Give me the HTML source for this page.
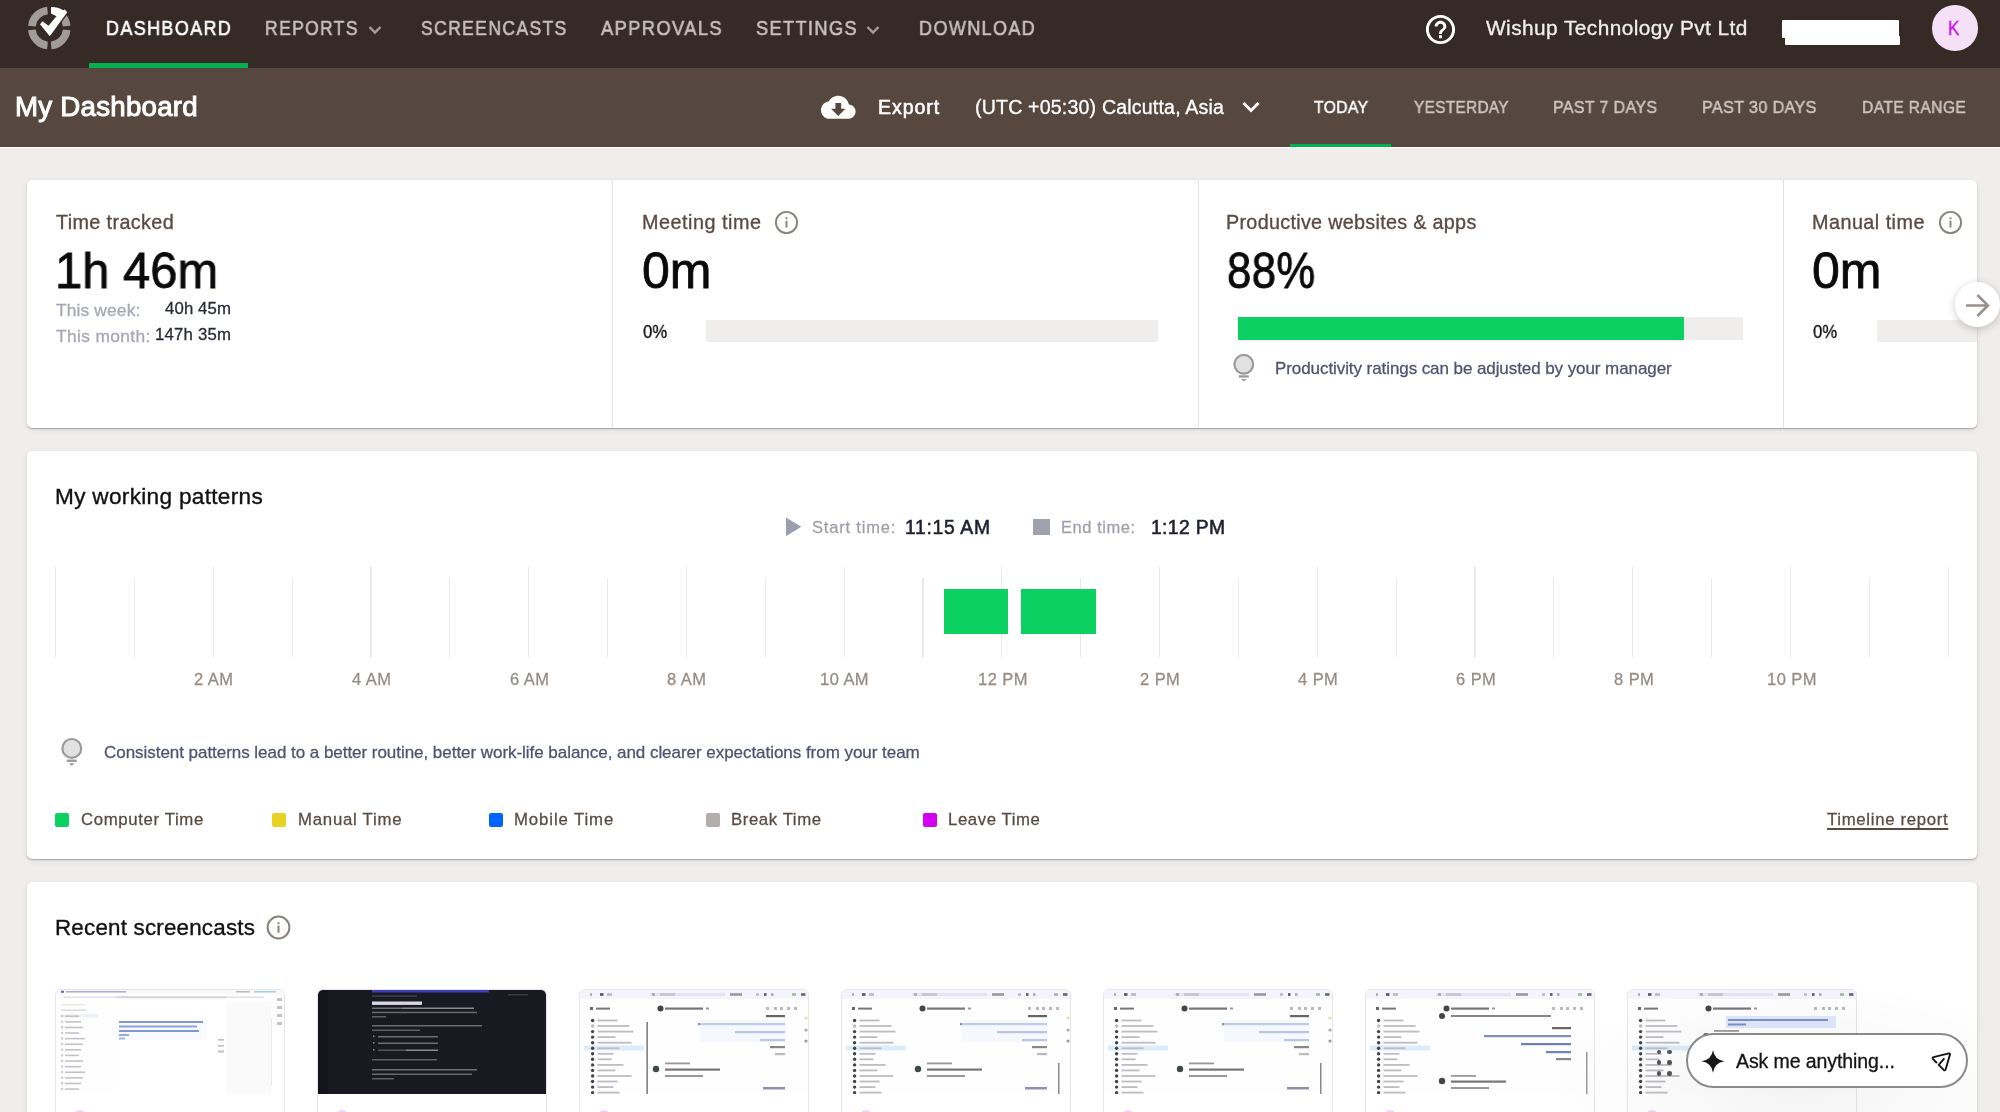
<!DOCTYPE html>
<html><head><meta charset="utf-8">
<style>
*{margin:0;padding:0;box-sizing:border-box;}
html,body{width:2000px;height:1112px;overflow:hidden;background:#efeeec;font-family:"Liberation Sans",sans-serif;}
.a{position:absolute;}
.t{position:absolute;white-space:nowrap;line-height:1;z-index:3;will-change:transform;}
#hdr{left:0;top:0;width:2000px;height:67.5px;background:#352a26;}
#sub{left:0;top:67.5px;width:2000px;height:79px;background:#56473f;}
.card{position:absolute;background:#fff;border-radius:5px;box-shadow:0 1px 1.5px rgba(0,0,0,0.28),0 2px 6px rgba(0,0,0,0.07);}
.vdiv{position:absolute;width:1px;background:#e7e4e2;}
.bar{position:absolute;background:#efeeec;}
.grid{position:absolute;width:1.2px;background:#ebe8e6;}
.sq{position:absolute;width:14px;height:14px;border-radius:2px;}
.thumb{position:absolute;top:988.5px;width:230px;height:130px;border:1px solid #e6e6e6;border-radius:6px;background:#fff;overflow:hidden;}
</style></head><body>
<div id="hdr" class="a"></div>
<div id="sub" class="a"></div>
<div class="a" style="left:0;top:146.5px;width:2000px;height:1.2px;background:#fff;"></div>
<!-- green underline nav -->
<div class="a" style="left:89px;top:63px;width:159px;height:4.8px;background:#03b04f;"></div>
<div class="a" style="left:1290px;top:143.5px;width:100.5px;height:3px;background:#03b04f;"></div>

<!-- logo -->
<svg class="a" style="left:0;top:0" width="80" height="60" viewBox="0 0 80 60">
  <g fill="none" stroke="#a29c99" stroke-width="7.6">
    <path d="M 47.5 10.5 A 17.4 17.4 0 0 0 31.9 26.2"/>
    <path d="M 31.9 29.9 A 17.4 17.4 0 0 0 47.5 45.5"/>
    <path d="M 51.1 45.5 A 17.4 17.4 0 0 0 66.7 29.9"/>
    <path d="M 66.7 26.2 A 17.4 17.4 0 0 0 51.1 10.5"/>
  </g>
  <path d="M 40 24.2 L 42.5 21.2 L 48.5 25.7 L 56.5 16.3 L 51 13.5 L 51 6.9 A 21.2 21.2 0 0 1 63.1 10.2 L 64.8 9.6 L 67.2 12.3 L 49.8 36.3 Z" fill="#fff" stroke="#352a26" stroke-width="2.6" stroke-linejoin="miter"/>
  <path d="M 40 24.2 L 42.5 21.2 L 48.5 25.7 L 56.5 16.3 L 51 13.5 L 51 6.9 A 21.2 21.2 0 0 1 63.1 10.2 L 64.8 9.6 L 67.2 12.3 L 49.8 36.3 Z" fill="#fff"/>
</svg>

<!-- nav chevrons -->
<svg class="a" style="left:368px;top:25px" width="14" height="10" viewBox="0 0 14 10"><path d="M1.5 2 L7 7.5 L12.5 2" fill="none" stroke="#a89f9a" stroke-width="2.4"/></svg>
<svg class="a" style="left:866px;top:25px" width="14" height="10" viewBox="0 0 14 10"><path d="M1.5 2 L7 7.5 L12.5 2" fill="none" stroke="#a89f9a" stroke-width="2.4"/></svg>

<!-- help icon -->
<svg class="a" style="left:1423px;top:12px" width="35" height="35" viewBox="0 0 24 24"><path fill="#fff" d="M11 18h2v-2h-2v2zm1-16C6.48 2 2 6.48 2 12s4.48 10 10 10 10-4.48 10-10S17.52 2 12 2zm0 18c-4.41 0-8-3.59-8-8s3.59-8 8-8 8 3.59 8 8-3.59 8-8 8zm0-14c-2.21 0-4 1.79-4 4h2c0-1.1.9-2 2-2s2 .9 2 2c0 2-3 1.75-3 5h2c0-2.25 3-2.5 3-5 0-2.21-1.79-4-4-4z"/></svg>
<!-- redaction -->
<div class="a" style="left:1782px;top:20px;width:117px;height:18px;background:#fff;border-radius:1px;"></div>
<div class="a" style="left:1785px;top:36px;width:115px;height:8.5px;background:#fff;border-radius:1px;"></div>
<!-- avatar -->
<div class="a" style="left:1932.2px;top:5.2px;width:45.7px;height:45.7px;border-radius:50%;background:#f6e0f8;"></div>

<!-- cloud download icon -->
<svg class="a" style="left:821.4px;top:90.4px" width="34.6" height="34.6" viewBox="0 0 24 24"><path fill="#fff" d="M19.35 10.04C18.67 6.59 15.64 4 12 4 9.11 4 6.6 5.64 5.35 8.04 2.34 8.36 0 10.91 0 14c0 3.31 2.69 6 6 6h13c2.76 0 5-2.24 5-5 0-2.64-2.05-4.78-4.65-4.96zM17 13l-5 5-5-5h3V9h4v4h3z"/></svg>
<!-- tz chevron -->
<svg class="a" style="left:1241px;top:99px" width="20" height="16" viewBox="0 0 20 16"><path d="M2.5 4 L10 11.5 L17.5 4" fill="none" stroke="#fff" stroke-width="3"/></svg>

<!-- CARD 1 -->
<div class="card" style="left:26.8px;top:180.4px;width:1950.5px;height:248px;"></div>
<div class="vdiv" style="left:612px;top:180.4px;height:248px;"></div>
<div class="vdiv" style="left:1197.6px;top:180.4px;height:248px;"></div>
<div class="vdiv" style="left:1782.5px;top:180.4px;height:248px;"></div>
<div class="bar" style="left:706px;top:320px;width:452px;height:22px;"></div>
<div class="bar" style="left:1238px;top:317px;width:504.7px;height:22.7px;"></div>
<div class="a" style="left:1238px;top:317px;width:446.2px;height:22.7px;background:#0ad162;"></div>
<div class="bar" style="left:1876.8px;top:320.3px;width:100.5px;height:21.7px;"></div>
<!-- info icons -->
<svg class="a" style="left:774px;top:210px" width="25" height="25" viewBox="0 0 25 25"><circle cx="12.5" cy="12.5" r="10.6" fill="none" stroke="#8c827c" stroke-width="1.9"/><rect x="11.55" y="10.6" width="1.9" height="7" fill="#8c827c"/><rect x="11.55" y="7.3" width="1.9" height="1.9" fill="#8c827c"/></svg>
<svg class="a" style="left:1937.8px;top:210px" width="25" height="25" viewBox="0 0 25 25"><circle cx="12.5" cy="12.5" r="10.6" fill="none" stroke="#8c827c" stroke-width="1.9"/><rect x="11.55" y="10.6" width="1.9" height="7" fill="#8c827c"/><rect x="11.55" y="7.3" width="1.9" height="1.9" fill="#8c827c"/></svg>
<!-- bulb card1 -->
<svg class="a" style="left:1231px;top:352px" width="26" height="32" viewBox="0 0 26 32"><circle cx="12.8" cy="12.3" r="9.4" fill="#e2e2e2" stroke="#9a9a9a" stroke-width="2.2"/><rect x="7.8" y="23.3" width="10" height="2.3" fill="#9a9a9a"/><path d="M10 27 L15.6 27 L12.8 29.6 Z" fill="#9a9a9a"/></svg>
<!-- arrow button -->
<div class="a" style="left:1955px;top:282px;width:44.6px;height:44.6px;border-radius:50%;background:#fff;box-shadow:0 2px 8px rgba(0,0,0,0.2);"></div>
<svg class="a" style="left:1964px;top:292px" width="28" height="28" viewBox="0 0 28 28"><path d="M2 13.5 H23.5 M13.4 3 L24 13.5 L13.4 24" fill="none" stroke="#998f8a" stroke-width="2.5"/></svg>

<!-- CARD 2 -->
<div class="card" style="left:26.8px;top:451px;width:1950.5px;height:408px;"></div>
<svg class="a" style="left:785px;top:517px" width="17" height="20" viewBox="0 0 17 20"><path d="M1 0.6 L16.3 9.7 L1 19.3 Z" fill="#9c9fac"/></svg>
<div class="a" style="left:1033px;top:518.8px;width:17px;height:16.5px;background:#9fa1ad;"></div>
<div class="grid" style="left:54.95px;top:566.7px;height:89.9px;"></div>
<div class="grid" style="left:133.81px;top:577.8px;height:78.8px;"></div>
<div class="grid" style="left:212.67px;top:566.7px;height:89.9px;"></div>
<div class="grid" style="left:291.53px;top:577.8px;height:78.8px;"></div>
<div class="grid" style="left:370.39px;top:566.7px;height:89.9px;"></div>
<div class="grid" style="left:449.25px;top:577.8px;height:78.8px;"></div>
<div class="grid" style="left:528.11px;top:566.7px;height:89.9px;"></div>
<div class="grid" style="left:606.97px;top:577.8px;height:78.8px;"></div>
<div class="grid" style="left:685.83px;top:566.7px;height:89.9px;"></div>
<div class="grid" style="left:764.69px;top:577.8px;height:78.8px;"></div>
<div class="grid" style="left:843.55px;top:566.7px;height:89.9px;"></div>
<div class="grid" style="left:922.41px;top:577.8px;height:78.8px;"></div>
<div class="grid" style="left:1001.27px;top:566.7px;height:89.9px;"></div>
<div class="grid" style="left:1080.13px;top:577.8px;height:78.8px;"></div>
<div class="grid" style="left:1158.99px;top:566.7px;height:89.9px;"></div>
<div class="grid" style="left:1237.85px;top:577.8px;height:78.8px;"></div>
<div class="grid" style="left:1316.71px;top:566.7px;height:89.9px;"></div>
<div class="grid" style="left:1395.57px;top:577.8px;height:78.8px;"></div>
<div class="grid" style="left:1474.43px;top:566.7px;height:89.9px;"></div>
<div class="grid" style="left:1553.29px;top:577.8px;height:78.8px;"></div>
<div class="grid" style="left:1632.15px;top:566.7px;height:89.9px;"></div>
<div class="grid" style="left:1711.01px;top:577.8px;height:78.8px;"></div>
<div class="grid" style="left:1789.87px;top:566.7px;height:89.9px;"></div>
<div class="grid" style="left:1868.73px;top:577.8px;height:78.8px;"></div>
<div class="grid" style="left:1947.59px;top:566.7px;height:89.9px;"></div>
<div class="a" style="left:943.7px;top:589px;width:64.6px;height:45px;background:#0ad162;"></div>
<div class="a" style="left:1021.1px;top:589px;width:75.4px;height:45px;background:#0ad162;"></div>
<svg class="a" style="left:59px;top:736px" width="26" height="32" viewBox="0 0 26 32"><circle cx="12.8" cy="12.4" r="9.4" fill="#e2e2e2" stroke="#9a9a9a" stroke-width="2.2"/><rect x="7.8" y="23.6" width="10" height="2.3" fill="#9a9a9a"/><path d="M10 27.3 L15.6 27.3 L12.8 29.9 Z" fill="#9a9a9a"/></svg>
<div class="sq" style="left:55.2px;top:813.2px;background:#0ad162;"></div>
<div class="sq" style="left:272.2px;top:813.2px;background:#e8d322;"></div>
<div class="sq" style="left:489.2px;top:813.2px;background:#0064fe;"></div>
<div class="sq" style="left:706px;top:813.2px;background:#b3aeab;"></div>
<div class="sq" style="left:923.4px;top:813.2px;background:#d300f2;"></div>

<!-- CARD 3 -->
<div class="card" style="left:26.8px;top:882px;width:1950.5px;height:260px;"></div>
<svg class="a" style="left:265.8px;top:914.5px" width="25" height="25" viewBox="0 0 25 25"><circle cx="12.5" cy="12.5" r="10.9" fill="none" stroke="#8c827c" stroke-width="2"/><rect x="11.5" y="10.6" width="2" height="7.2" fill="#8c827c"/><rect x="11.5" y="7.2" width="2" height="2" fill="#8c827c"/></svg>
<div class="thumb" style="left:54.5px;"><svg width="228" height="104.5" viewBox="0 0 228 104.5" style="position:absolute;left:0;top:0;filter:blur(0.45px)"><rect width="228" height="104.5" fill="#fff"/><rect x="0" y="0" width="228" height="3.5" fill="#f8f8fc"/><rect x="5" y="0.8" width="3" height="2" fill="#6a5acd"/><rect x="10" y="1" width="60" height="1.5" fill="#a9acd6"/><rect x="180" y="1" width="14" height="1.5" fill="#bbb"/><rect x="198" y="1" width="22" height="1.5" fill="#9fd0e8"/><rect x="8" y="6.5" width="200" height="1.6" fill="#e2e2e6"/><rect x="60" y="6.2" width="110" height="2" fill="#d6d6dc"/><rect x="5" y="14" width="25" height="1.2" fill="#ddd"/><rect x="5" y="19.5" width="25" height="1.3" fill="#c8c8cc"/><rect x="4" y="24" width="38" height="3.5" fill="#e8ecfa"/><rect x="9" y="25.5" width="14" height="1.5" fill="#a6a6ae"/><rect x="5" y="25.0" width="2.2" height="2.2" fill="#b8b8c0"/><rect x="9" y="31.1" width="16" height="1.5" fill="#a6a6ae"/><rect x="5" y="30.6" width="2.2" height="2.2" fill="#b8b8c0"/><rect x="9" y="36.7" width="18" height="1.5" fill="#a6a6ae"/><rect x="5" y="36.2" width="2.2" height="2.2" fill="#b8b8c0"/><rect x="9" y="42.3" width="14" height="1.5" fill="#a6a6ae"/><rect x="5" y="41.8" width="2.2" height="2.2" fill="#b8b8c0"/><rect x="9" y="47.9" width="20" height="1.5" fill="#a6a6ae"/><rect x="5" y="47.4" width="2.2" height="2.2" fill="#b8b8c0"/><rect x="9" y="53.5" width="18" height="1.5" fill="#a6a6ae"/><rect x="5" y="53.0" width="2.2" height="2.2" fill="#b8b8c0"/><rect x="9" y="59.1" width="16" height="1.5" fill="#a6a6ae"/><rect x="5" y="58.6" width="2.2" height="2.2" fill="#b8b8c0"/><rect x="9" y="64.7" width="14" height="1.5" fill="#a6a6ae"/><rect x="5" y="64.2" width="2.2" height="2.2" fill="#b8b8c0"/><rect x="9" y="70.3" width="18" height="1.5" fill="#a6a6ae"/><rect x="5" y="69.8" width="2.2" height="2.2" fill="#b8b8c0"/><rect x="9" y="75.9" width="16" height="1.5" fill="#a6a6ae"/><rect x="5" y="75.4" width="2.2" height="2.2" fill="#b8b8c0"/><rect x="9" y="81.5" width="20" height="1.5" fill="#a6a6ae"/><rect x="5" y="81.0" width="2.2" height="2.2" fill="#b8b8c0"/><rect x="9" y="87.1" width="18" height="1.5" fill="#a6a6ae"/><rect x="5" y="86.6" width="2.2" height="2.2" fill="#b8b8c0"/><rect x="9" y="92.7" width="16" height="1.5" fill="#a6a6ae"/><rect x="5" y="92.2" width="2.2" height="2.2" fill="#b8b8c0"/><rect x="9" y="98.3" width="14" height="1.5" fill="#a6a6ae"/><rect x="5" y="97.8" width="2.2" height="2.2" fill="#b8b8c0"/><rect x="63" y="31" width="84" height="2" fill="#4766c0"/><rect x="63" y="35.5" width="78" height="2" fill="#5b78c8"/><rect x="63" y="40" width="80" height="2" fill="#4766c0"/><rect x="63" y="44" width="10" height="2" fill="#6a85cc"/><rect x="63" y="47.5" width="6" height="2" fill="#7d93d0"/><rect x="60" y="30" width="90" height="20" fill="#eef2fc" opacity="0.35"/><rect x="162" y="49" width="6" height="1.6" fill="#c0c0c6"/><rect x="162" y="55" width="6" height="1.6" fill="#c0c0c6"/><rect x="162" y="60" width="6" height="3" fill="#d0d0d6"/><rect x="221" y="8" width="5" height="3" fill="#c4c4ca"/><rect x="221" y="16" width="5" height="3" fill="#c4c4ca"/><rect x="221" y="24" width="5" height="3" fill="#c4c4ca"/><rect x="221" y="32" width="5" height="3" fill="#c4c4ca"/><rect x="215" y="28" width="1" height="68" fill="#ececf0"/><rect x="170" y="12" width="45" height="92" fill="#fafafb"/><rect x="0" y="14" width="58" height="90.5" fill="#fbfbfd" opacity="0.3"/></svg></div>
<div class="thumb" style="left:316.5px;"><svg width="228" height="104.5" viewBox="0 0 228 104.5" style="position:absolute;left:0;top:0;filter:blur(0.45px)"><rect width="228" height="104.5" fill="#191922"/><rect x="54" y="0" width="117" height="2.5" fill="#3d3fb5"/><rect x="54" y="5.5" width="45" height="1.2" fill="#4a4a55"/><rect x="54" y="11.5" width="50" height="3.4" fill="#d8d8de"/><rect x="54" y="17.5" width="30" height="1.5" fill="#6e6e7a"/><rect x="84" y="17.5" width="72" height="1.5" fill="#8a8a95"/><rect x="54" y="21.7" width="105" height="1.5" fill="#6a6a76"/><rect x="54" y="26" width="14" height="1.5" fill="#5e5e6a"/><rect x="54" y="35" width="110" height="1.5" fill="#6a6a76"/><rect x="54" y="39.5" width="48" height="1.5" fill="#5e5e6a"/><rect x="60" y="46" width="60" height="1.5" fill="#6e6e7a"/><rect x="60" y="52.5" width="60" height="1.5" fill="#6e6e7a"/><rect x="60" y="59.5" width="28" height="1.5" fill="#55555f"/><rect x="88" y="59.5" width="32" height="1.5" fill="#8a8a95"/><rect x="54" y="69" width="65" height="1.5" fill="#5e5e6a"/><rect x="54" y="79" width="105" height="1.5" fill="#6e6e7a"/><rect x="54" y="83.5" width="100" height="1.5" fill="#6a6a76"/><rect x="54" y="88" width="22" height="1.5" fill="#5e5e6a"/><rect x="55" y="45.5" width="1.5" height="1.5" fill="#888"/><rect x="55" y="52" width="1.5" height="1.5" fill="#888"/><rect x="55" y="59" width="1.5" height="1.5" fill="#888"/><rect x="0" y="0" width="10" height="104.5" fill="#14141c"/><rect x="190" y="4" width="20" height="1.5" fill="#3a3a44"/></svg></div>
<div class="thumb" style="left:578.5px;"><svg width="228" height="104.5" viewBox="0 0 228 104.5" style="position:absolute;left:0;top:0;filter:blur(0.45px)"><rect width="228" height="104.5" fill="#fefeff"/><rect x="0" y="0" width="228" height="9" fill="#f5f3fb"/><rect x="70" y="3" width="75" height="3" fill="#e6e4f3"/><rect x="10" y="3.2" width="2" height="2.6" fill="#aaa"/><rect x="20" y="3.2" width="3.5" height="2.6" fill="#555"/><rect x="27" y="3.2" width="5" height="2.6" fill="#bbb"/><rect x="72" y="3.2" width="3" height="2.6" fill="#aaa"/><rect x="80" y="3.2" width="15" height="2.6" fill="#c4c4cc"/><rect x="150" y="3.2" width="12" height="2.6" fill="#999"/><rect x="176" y="3.2" width="3" height="2.6" fill="#bbb"/><rect x="184" y="3.2" width="2.5" height="2.6" fill="#555"/><rect x="191" y="3.2" width="2.5" height="2.6" fill="#aaa"/><rect x="212" y="3.2" width="4" height="2.6" fill="#9b9"/><rect x="221" y="3.2" width="4.5" height="2.6" fill="#666"/><rect x="10" y="17" width="3" height="3" fill="#666"/><rect x="16" y="17.6" width="14" height="2" fill="#777"/><rect x="4" y="55.5" width="60" height="5" fill="#dcecfa"/><circle cx="12.6" cy="30.5" r="1.7" fill="#444"/><rect x="17.5" y="29.6" width="20" height="1.8" fill="#bdbdc2"/><circle cx="12.6" cy="36.0" r="1.7" fill="#bbb"/><rect x="17.5" y="35.1" width="32" height="1.8" fill="#bdbdc2"/><circle cx="12.6" cy="41.6" r="1.7" fill="#444"/><rect x="17.5" y="40.7" width="36" height="1.8" fill="#bdbdc2"/><circle cx="12.6" cy="47.1" r="1.7" fill="#444"/><rect x="17.5" y="46.2" width="18" height="1.8" fill="#bdbdc2"/><circle cx="12.6" cy="52.7" r="1.7" fill="#444"/><rect x="17.5" y="51.8" width="34" height="1.8" fill="#bdbdc2"/><circle cx="12.6" cy="58.2" r="1.7" fill="#444"/><rect x="17.5" y="57.4" width="22" height="1.8" fill="#bdbdc2"/><circle cx="12.6" cy="63.8" r="1.7" fill="#444"/><rect x="17.5" y="62.9" width="16" height="1.8" fill="#bdbdc2"/><circle cx="12.6" cy="69.3" r="1.7" fill="#444"/><rect x="17.5" y="68.4" width="14" height="1.8" fill="#bdbdc2"/><circle cx="12.6" cy="74.9" r="1.7" fill="#444"/><rect x="17.5" y="74.0" width="26" height="1.8" fill="#bdbdc2"/><circle cx="12.6" cy="80.4" r="1.7" fill="#444"/><rect x="17.5" y="79.5" width="18" height="1.8" fill="#bdbdc2"/><circle cx="12.6" cy="86.0" r="1.7" fill="#444"/><rect x="17.5" y="85.1" width="34" height="1.8" fill="#bdbdc2"/><circle cx="12.6" cy="91.5" r="1.7" fill="#444"/><rect x="17.5" y="90.6" width="20" height="1.8" fill="#bdbdc2"/><circle cx="12.6" cy="97.1" r="1.7" fill="#444"/><rect x="17.5" y="96.2" width="16" height="1.8" fill="#bdbdc2"/><circle cx="12.6" cy="102.6" r="1.7" fill="#444"/><rect x="17.5" y="101.7" width="22" height="1.8" fill="#bdbdc2"/><circle cx="80.5" cy="18.5" r="3" fill="#444"/><rect x="85" y="17.5" width="38" height="2.2" fill="#777"/><rect x="126" y="17.5" width="3" height="2" fill="#999"/><rect x="186" y="17" width="3" height="3" fill="#bbb"/><rect x="194" y="17" width="3" height="3" fill="#bbb"/><rect x="200" y="17" width="3" height="3" fill="#bbb"/><rect x="207" y="17" width="3" height="3" fill="#bbb"/><rect x="214" y="17" width="3" height="3" fill="#bbb"/><rect x="0" y="0" width="0" height="0"/><rect x="186" y="25" width="19" height="2.2" fill="#666"/><rect x="118" y="33" width="87" height="2.2" fill="#7d8fc0"/><rect x="155" y="41" width="50" height="2.2" fill="#6f7fb8"/><rect x="180" y="49" width="25" height="2.2" fill="#7283b8"/><rect x="190" y="56" width="15" height="2.2" fill="#888"/><rect x="195" y="63" width="10" height="2.2" fill="#bbb"/><rect x="120" y="30" width="86" height="22" fill="#eef3fd" opacity="0.6"/><circle cx="76" cy="79" r="3.2" fill="#3d4a42"/><rect x="85" y="72.5" width="25" height="1.8" fill="#999"/><rect x="85" y="78.5" width="55" height="2.2" fill="#777"/><rect x="85" y="85" width="38" height="2" fill="#999"/><rect x="183" y="97" width="22" height="2.5" fill="#8d8fb3"/><circle cx="226" cy="28" r="1.6" fill="#cfe6a0"/><circle cx="226" cy="40" r="1.6" fill="#aab"/><circle cx="226" cy="51" r="1.6" fill="#99a"/><rect x="66.5" y="32" width="1.2" height="73" fill="#555"/></svg></div>
<div class="thumb" style="left:840.5px;"><svg width="228" height="104.5" viewBox="0 0 228 104.5" style="position:absolute;left:0;top:0;filter:blur(0.45px)"><rect width="228" height="104.5" fill="#fefeff"/><rect x="0" y="0" width="228" height="9" fill="#f5f3fb"/><rect x="70" y="3" width="75" height="3" fill="#e6e4f3"/><rect x="10" y="3.2" width="2" height="2.6" fill="#aaa"/><rect x="20" y="3.2" width="3.5" height="2.6" fill="#555"/><rect x="27" y="3.2" width="5" height="2.6" fill="#bbb"/><rect x="72" y="3.2" width="3" height="2.6" fill="#aaa"/><rect x="80" y="3.2" width="15" height="2.6" fill="#c4c4cc"/><rect x="150" y="3.2" width="12" height="2.6" fill="#999"/><rect x="176" y="3.2" width="3" height="2.6" fill="#bbb"/><rect x="184" y="3.2" width="2.5" height="2.6" fill="#555"/><rect x="191" y="3.2" width="2.5" height="2.6" fill="#aaa"/><rect x="212" y="3.2" width="4" height="2.6" fill="#9b9"/><rect x="221" y="3.2" width="4.5" height="2.6" fill="#666"/><rect x="10" y="17" width="3" height="3" fill="#666"/><rect x="16" y="17.6" width="14" height="2" fill="#777"/><rect x="4" y="55.5" width="60" height="5" fill="#dcecfa"/><circle cx="12.6" cy="30.5" r="1.7" fill="#444"/><rect x="17.5" y="29.6" width="20" height="1.8" fill="#bdbdc2"/><circle cx="12.6" cy="36.0" r="1.7" fill="#bbb"/><rect x="17.5" y="35.1" width="32" height="1.8" fill="#bdbdc2"/><circle cx="12.6" cy="41.6" r="1.7" fill="#444"/><rect x="17.5" y="40.7" width="36" height="1.8" fill="#bdbdc2"/><circle cx="12.6" cy="47.1" r="1.7" fill="#444"/><rect x="17.5" y="46.2" width="18" height="1.8" fill="#bdbdc2"/><circle cx="12.6" cy="52.7" r="1.7" fill="#444"/><rect x="17.5" y="51.8" width="34" height="1.8" fill="#bdbdc2"/><circle cx="12.6" cy="58.2" r="1.7" fill="#444"/><rect x="17.5" y="57.4" width="22" height="1.8" fill="#bdbdc2"/><circle cx="12.6" cy="63.8" r="1.7" fill="#444"/><rect x="17.5" y="62.9" width="16" height="1.8" fill="#bdbdc2"/><circle cx="12.6" cy="69.3" r="1.7" fill="#444"/><rect x="17.5" y="68.4" width="14" height="1.8" fill="#bdbdc2"/><circle cx="12.6" cy="74.9" r="1.7" fill="#444"/><rect x="17.5" y="74.0" width="26" height="1.8" fill="#bdbdc2"/><circle cx="12.6" cy="80.4" r="1.7" fill="#444"/><rect x="17.5" y="79.5" width="18" height="1.8" fill="#bdbdc2"/><circle cx="12.6" cy="86.0" r="1.7" fill="#444"/><rect x="17.5" y="85.1" width="34" height="1.8" fill="#bdbdc2"/><circle cx="12.6" cy="91.5" r="1.7" fill="#444"/><rect x="17.5" y="90.6" width="20" height="1.8" fill="#bdbdc2"/><circle cx="12.6" cy="97.1" r="1.7" fill="#444"/><rect x="17.5" y="96.2" width="16" height="1.8" fill="#bdbdc2"/><circle cx="12.6" cy="102.6" r="1.7" fill="#444"/><rect x="17.5" y="101.7" width="22" height="1.8" fill="#bdbdc2"/><circle cx="80.5" cy="18.5" r="3" fill="#444"/><rect x="85" y="17.5" width="38" height="2.2" fill="#777"/><rect x="126" y="17.5" width="3" height="2" fill="#999"/><rect x="186" y="17" width="3" height="3" fill="#bbb"/><rect x="194" y="17" width="3" height="3" fill="#bbb"/><rect x="200" y="17" width="3" height="3" fill="#bbb"/><rect x="207" y="17" width="3" height="3" fill="#bbb"/><rect x="214" y="17" width="3" height="3" fill="#bbb"/><rect x="0" y="0" width="0" height="0"/><rect x="186" y="25" width="19" height="2.2" fill="#666"/><rect x="118" y="33" width="87" height="2.2" fill="#7d8fc0"/><rect x="155" y="41" width="50" height="2.2" fill="#6f7fb8"/><rect x="180" y="49" width="25" height="2.2" fill="#7283b8"/><rect x="190" y="56" width="15" height="2.2" fill="#888"/><rect x="195" y="63" width="10" height="2.2" fill="#bbb"/><rect x="120" y="30" width="86" height="22" fill="#eef3fd" opacity="0.6"/><circle cx="76" cy="79" r="3.2" fill="#3d4a42"/><rect x="85" y="72.5" width="25" height="1.8" fill="#999"/><rect x="85" y="78.5" width="55" height="2.2" fill="#777"/><rect x="85" y="85" width="38" height="2" fill="#999"/><rect x="183" y="97" width="22" height="2.5" fill="#8d8fb3"/><circle cx="226" cy="28" r="1.6" fill="#cfe6a0"/><circle cx="226" cy="40" r="1.6" fill="#aab"/><circle cx="226" cy="51" r="1.6" fill="#99a"/><rect x="216" y="73" width="1.5" height="32" fill="#888"/></svg></div>
<div class="thumb" style="left:1102.5px;"><svg width="228" height="104.5" viewBox="0 0 228 104.5" style="position:absolute;left:0;top:0;filter:blur(0.45px)"><rect width="228" height="104.5" fill="#fefeff"/><rect x="0" y="0" width="228" height="9" fill="#f5f3fb"/><rect x="70" y="3" width="75" height="3" fill="#e6e4f3"/><rect x="10" y="3.2" width="2" height="2.6" fill="#aaa"/><rect x="20" y="3.2" width="3.5" height="2.6" fill="#555"/><rect x="27" y="3.2" width="5" height="2.6" fill="#bbb"/><rect x="72" y="3.2" width="3" height="2.6" fill="#aaa"/><rect x="80" y="3.2" width="15" height="2.6" fill="#c4c4cc"/><rect x="150" y="3.2" width="12" height="2.6" fill="#999"/><rect x="176" y="3.2" width="3" height="2.6" fill="#bbb"/><rect x="184" y="3.2" width="2.5" height="2.6" fill="#555"/><rect x="191" y="3.2" width="2.5" height="2.6" fill="#aaa"/><rect x="212" y="3.2" width="4" height="2.6" fill="#9b9"/><rect x="221" y="3.2" width="4.5" height="2.6" fill="#666"/><rect x="10" y="17" width="3" height="3" fill="#666"/><rect x="16" y="17.6" width="14" height="2" fill="#777"/><rect x="4" y="55.5" width="60" height="5" fill="#dcecfa"/><circle cx="12.6" cy="30.5" r="1.7" fill="#444"/><rect x="17.5" y="29.6" width="20" height="1.8" fill="#bdbdc2"/><circle cx="12.6" cy="36.0" r="1.7" fill="#bbb"/><rect x="17.5" y="35.1" width="32" height="1.8" fill="#bdbdc2"/><circle cx="12.6" cy="41.6" r="1.7" fill="#444"/><rect x="17.5" y="40.7" width="36" height="1.8" fill="#bdbdc2"/><circle cx="12.6" cy="47.1" r="1.7" fill="#444"/><rect x="17.5" y="46.2" width="18" height="1.8" fill="#bdbdc2"/><circle cx="12.6" cy="52.7" r="1.7" fill="#444"/><rect x="17.5" y="51.8" width="34" height="1.8" fill="#bdbdc2"/><circle cx="12.6" cy="58.2" r="1.7" fill="#444"/><rect x="17.5" y="57.4" width="22" height="1.8" fill="#bdbdc2"/><circle cx="12.6" cy="63.8" r="1.7" fill="#444"/><rect x="17.5" y="62.9" width="16" height="1.8" fill="#bdbdc2"/><circle cx="12.6" cy="69.3" r="1.7" fill="#444"/><rect x="17.5" y="68.4" width="14" height="1.8" fill="#bdbdc2"/><circle cx="12.6" cy="74.9" r="1.7" fill="#444"/><rect x="17.5" y="74.0" width="26" height="1.8" fill="#bdbdc2"/><circle cx="12.6" cy="80.4" r="1.7" fill="#444"/><rect x="17.5" y="79.5" width="18" height="1.8" fill="#bdbdc2"/><circle cx="12.6" cy="86.0" r="1.7" fill="#444"/><rect x="17.5" y="85.1" width="34" height="1.8" fill="#bdbdc2"/><circle cx="12.6" cy="91.5" r="1.7" fill="#444"/><rect x="17.5" y="90.6" width="20" height="1.8" fill="#bdbdc2"/><circle cx="12.6" cy="97.1" r="1.7" fill="#444"/><rect x="17.5" y="96.2" width="16" height="1.8" fill="#bdbdc2"/><circle cx="12.6" cy="102.6" r="1.7" fill="#444"/><rect x="17.5" y="101.7" width="22" height="1.8" fill="#bdbdc2"/><circle cx="80.5" cy="18.5" r="3" fill="#444"/><rect x="85" y="17.5" width="38" height="2.2" fill="#777"/><rect x="126" y="17.5" width="3" height="2" fill="#999"/><rect x="186" y="17" width="3" height="3" fill="#bbb"/><rect x="194" y="17" width="3" height="3" fill="#bbb"/><rect x="200" y="17" width="3" height="3" fill="#bbb"/><rect x="207" y="17" width="3" height="3" fill="#bbb"/><rect x="214" y="17" width="3" height="3" fill="#bbb"/><rect x="0" y="0" width="0" height="0"/><rect x="186" y="25" width="19" height="2.2" fill="#666"/><rect x="118" y="33" width="87" height="2.2" fill="#7d8fc0"/><rect x="155" y="41" width="50" height="2.2" fill="#6f7fb8"/><rect x="180" y="49" width="25" height="2.2" fill="#7283b8"/><rect x="190" y="56" width="15" height="2.2" fill="#888"/><rect x="195" y="63" width="10" height="2.2" fill="#bbb"/><rect x="120" y="30" width="86" height="22" fill="#eef3fd" opacity="0.6"/><circle cx="76" cy="79" r="3.2" fill="#3d4a42"/><rect x="85" y="72.5" width="25" height="1.8" fill="#999"/><rect x="85" y="78.5" width="55" height="2.2" fill="#777"/><rect x="85" y="85" width="38" height="2" fill="#999"/><rect x="183" y="97" width="22" height="2.5" fill="#8d8fb3"/><circle cx="226" cy="28" r="1.6" fill="#cfe6a0"/><circle cx="226" cy="40" r="1.6" fill="#aab"/><circle cx="226" cy="51" r="1.6" fill="#99a"/><rect x="216" y="73" width="1.5" height="32" fill="#888"/></svg></div>
<div class="thumb" style="left:1364.5px;"><svg width="228" height="104.5" viewBox="0 0 228 104.5" style="position:absolute;left:0;top:0;filter:blur(0.45px)"><rect width="228" height="104.5" fill="#fefeff"/><rect x="0" y="0" width="228" height="9" fill="#f5f3fb"/><rect x="70" y="3" width="75" height="3" fill="#e6e4f3"/><rect x="10" y="3.2" width="2" height="2.6" fill="#aaa"/><rect x="20" y="3.2" width="3.5" height="2.6" fill="#555"/><rect x="27" y="3.2" width="5" height="2.6" fill="#bbb"/><rect x="72" y="3.2" width="3" height="2.6" fill="#aaa"/><rect x="80" y="3.2" width="15" height="2.6" fill="#c4c4cc"/><rect x="150" y="3.2" width="12" height="2.6" fill="#999"/><rect x="176" y="3.2" width="3" height="2.6" fill="#bbb"/><rect x="184" y="3.2" width="2.5" height="2.6" fill="#555"/><rect x="191" y="3.2" width="2.5" height="2.6" fill="#aaa"/><rect x="212" y="3.2" width="4" height="2.6" fill="#9b9"/><rect x="221" y="3.2" width="4.5" height="2.6" fill="#666"/><rect x="10" y="17" width="3" height="3" fill="#666"/><rect x="16" y="17.6" width="14" height="2" fill="#777"/><rect x="4" y="55.5" width="60" height="5" fill="#dcecfa"/><circle cx="12.6" cy="30.5" r="1.7" fill="#444"/><rect x="17.5" y="29.6" width="20" height="1.8" fill="#bdbdc2"/><circle cx="12.6" cy="36.0" r="1.7" fill="#bbb"/><rect x="17.5" y="35.1" width="32" height="1.8" fill="#bdbdc2"/><circle cx="12.6" cy="41.6" r="1.7" fill="#444"/><rect x="17.5" y="40.7" width="36" height="1.8" fill="#bdbdc2"/><circle cx="12.6" cy="47.1" r="1.7" fill="#444"/><rect x="17.5" y="46.2" width="18" height="1.8" fill="#bdbdc2"/><circle cx="12.6" cy="52.7" r="1.7" fill="#444"/><rect x="17.5" y="51.8" width="34" height="1.8" fill="#bdbdc2"/><circle cx="12.6" cy="58.2" r="1.7" fill="#444"/><rect x="17.5" y="57.4" width="22" height="1.8" fill="#bdbdc2"/><circle cx="12.6" cy="63.8" r="1.7" fill="#444"/><rect x="17.5" y="62.9" width="16" height="1.8" fill="#bdbdc2"/><circle cx="12.6" cy="69.3" r="1.7" fill="#444"/><rect x="17.5" y="68.4" width="14" height="1.8" fill="#bdbdc2"/><circle cx="12.6" cy="74.9" r="1.7" fill="#444"/><rect x="17.5" y="74.0" width="26" height="1.8" fill="#bdbdc2"/><circle cx="12.6" cy="80.4" r="1.7" fill="#444"/><rect x="17.5" y="79.5" width="18" height="1.8" fill="#bdbdc2"/><circle cx="12.6" cy="86.0" r="1.7" fill="#444"/><rect x="17.5" y="85.1" width="34" height="1.8" fill="#bdbdc2"/><circle cx="12.6" cy="91.5" r="1.7" fill="#444"/><rect x="17.5" y="90.6" width="20" height="1.8" fill="#bdbdc2"/><circle cx="12.6" cy="97.1" r="1.7" fill="#444"/><rect x="17.5" y="96.2" width="16" height="1.8" fill="#bdbdc2"/><circle cx="12.6" cy="102.6" r="1.7" fill="#444"/><rect x="17.5" y="101.7" width="22" height="1.8" fill="#bdbdc2"/><circle cx="80.5" cy="18.5" r="3" fill="#444"/><rect x="85" y="17.5" width="38" height="2.2" fill="#777"/><rect x="126" y="17.5" width="3" height="2" fill="#999"/><rect x="186" y="17" width="3" height="3" fill="#bbb"/><rect x="194" y="17" width="3" height="3" fill="#bbb"/><rect x="200" y="17" width="3" height="3" fill="#bbb"/><rect x="207" y="17" width="3" height="3" fill="#bbb"/><rect x="214" y="17" width="3" height="3" fill="#bbb"/><rect x="186" y="37" width="19" height="2.2" fill="#666"/><rect x="118" y="45" width="87" height="2.2" fill="#7d8fc0"/><rect x="155" y="53" width="50" height="2.2" fill="#6f7fb8"/><rect x="180" y="61" width="25" height="2.2" fill="#7283b8"/><rect x="190" y="68" width="15" height="2.2" fill="#888"/><circle cx="76" cy="26" r="3" fill="#444"/><rect x="85" y="25" width="100" height="2" fill="#888"/><circle cx="76" cy="91" r="3.2" fill="#444"/><rect x="85" y="85" width="25" height="1.8" fill="#999"/><rect x="85" y="90.5" width="55" height="2.2" fill="#777"/><rect x="85" y="97" width="38" height="2" fill="#999"/><rect x="220" y="62" width="1.5" height="42" fill="#999"/></svg></div>
<div class="thumb" style="left:1626.5px;"><svg width="228" height="104.5" viewBox="0 0 228 104.5" style="position:absolute;left:0;top:0;filter:blur(0.45px)"><rect width="228" height="104.5" fill="#fefeff"/><rect x="0" y="0" width="228" height="9" fill="#f5f3fb"/><rect x="70" y="3" width="75" height="3" fill="#e6e4f3"/><rect x="10" y="3.2" width="2" height="2.6" fill="#aaa"/><rect x="20" y="3.2" width="3.5" height="2.6" fill="#555"/><rect x="27" y="3.2" width="5" height="2.6" fill="#bbb"/><rect x="72" y="3.2" width="3" height="2.6" fill="#aaa"/><rect x="80" y="3.2" width="15" height="2.6" fill="#c4c4cc"/><rect x="150" y="3.2" width="12" height="2.6" fill="#999"/><rect x="176" y="3.2" width="3" height="2.6" fill="#bbb"/><rect x="184" y="3.2" width="2.5" height="2.6" fill="#555"/><rect x="191" y="3.2" width="2.5" height="2.6" fill="#aaa"/><rect x="212" y="3.2" width="4" height="2.6" fill="#9b9"/><rect x="221" y="3.2" width="4.5" height="2.6" fill="#666"/><rect x="10" y="17" width="3" height="3" fill="#666"/><rect x="16" y="17.6" width="14" height="2" fill="#777"/><rect x="4" y="55.5" width="60" height="5" fill="#dcecfa"/><circle cx="12.6" cy="30.5" r="1.7" fill="#444"/><rect x="17.5" y="29.6" width="20" height="1.8" fill="#bdbdc2"/><circle cx="12.6" cy="36.0" r="1.7" fill="#bbb"/><rect x="17.5" y="35.1" width="32" height="1.8" fill="#bdbdc2"/><circle cx="12.6" cy="41.6" r="1.7" fill="#444"/><rect x="17.5" y="40.7" width="36" height="1.8" fill="#bdbdc2"/><circle cx="12.6" cy="47.1" r="1.7" fill="#444"/><rect x="17.5" y="46.2" width="18" height="1.8" fill="#bdbdc2"/><circle cx="12.6" cy="52.7" r="1.7" fill="#444"/><rect x="17.5" y="51.8" width="34" height="1.8" fill="#bdbdc2"/><circle cx="12.6" cy="58.2" r="1.7" fill="#444"/><rect x="17.5" y="57.4" width="22" height="1.8" fill="#bdbdc2"/><circle cx="12.6" cy="63.8" r="1.7" fill="#444"/><rect x="17.5" y="62.9" width="16" height="1.8" fill="#bdbdc2"/><circle cx="12.6" cy="69.3" r="1.7" fill="#444"/><rect x="17.5" y="68.4" width="14" height="1.8" fill="#bdbdc2"/><circle cx="12.6" cy="74.9" r="1.7" fill="#444"/><rect x="17.5" y="74.0" width="26" height="1.8" fill="#bdbdc2"/><circle cx="12.6" cy="80.4" r="1.7" fill="#444"/><rect x="17.5" y="79.5" width="18" height="1.8" fill="#bdbdc2"/><circle cx="12.6" cy="86.0" r="1.7" fill="#444"/><rect x="17.5" y="85.1" width="34" height="1.8" fill="#bdbdc2"/><circle cx="12.6" cy="91.5" r="1.7" fill="#444"/><rect x="17.5" y="90.6" width="20" height="1.8" fill="#bdbdc2"/><circle cx="12.6" cy="97.1" r="1.7" fill="#444"/><rect x="17.5" y="96.2" width="16" height="1.8" fill="#bdbdc2"/><circle cx="12.6" cy="102.6" r="1.7" fill="#444"/><rect x="17.5" y="101.7" width="22" height="1.8" fill="#bdbdc2"/><circle cx="80.5" cy="18.5" r="3" fill="#444"/><rect x="85" y="17.5" width="38" height="2.2" fill="#777"/><rect x="126" y="17.5" width="3" height="2" fill="#999"/><rect x="186" y="17" width="3" height="3" fill="#bbb"/><rect x="194" y="17" width="3" height="3" fill="#bbb"/><rect x="200" y="17" width="3" height="3" fill="#bbb"/><rect x="207" y="17" width="3" height="3" fill="#bbb"/><rect x="214" y="17" width="3" height="3" fill="#bbb"/><rect x="98" y="26" width="110" height="12" fill="#dfe8fb"/><rect x="100" y="29" width="100" height="2" fill="#7f8fc5"/><rect x="100" y="33.5" width="18" height="2" fill="#7f8fc5"/><circle cx="78" cy="46" r="3" fill="#555"/><rect x="86" y="40" width="25" height="1.8" fill="#999"/><rect x="86" y="45" width="100" height="2" fill="#888"/></svg></div><div class="a" style="left:72.5px;top:1109.5px;width:14px;height:14px;border-radius:50%;background:#f2d4f6;z-index:1"></div><div class="a" style="left:334.5px;top:1109.5px;width:14px;height:14px;border-radius:50%;background:#f2d4f6;z-index:1"></div><div class="a" style="left:596.5px;top:1109.5px;width:14px;height:14px;border-radius:50%;background:#f2d4f6;z-index:1"></div><div class="a" style="left:858.5px;top:1109.5px;width:14px;height:14px;border-radius:50%;background:#f2d4f6;z-index:1"></div><div class="a" style="left:1120.5px;top:1109.5px;width:14px;height:14px;border-radius:50%;background:#f2d4f6;z-index:1"></div><div class="a" style="left:1382.5px;top:1109.5px;width:14px;height:14px;border-radius:50%;background:#f2d4f6;z-index:1"></div><div class="a" style="left:1644.5px;top:1109.5px;width:14px;height:14px;border-radius:50%;background:#f2d4f6;z-index:1"></div>

<div class="t" style="left:105.53px;top:18.35px;font-size:20.5px;color:#ffffff;-webkit-text-stroke:0.61px currentColor;transform:scaleX(0.8747);transform-origin:0 0;letter-spacing:1.600px;">DASHBOARD</div>
<div class="t" style="left:264.75px;top:18.35px;font-size:20.5px;color:#c8bfba;-webkit-text-stroke:0.61px currentColor;transform:scaleX(0.8532);transform-origin:0 0;letter-spacing:1.600px;">REPORTS</div>
<div class="t" style="left:420.70px;top:18.35px;font-size:20.5px;color:#c8bfba;-webkit-text-stroke:0.61px currentColor;transform:scaleX(0.8557);transform-origin:0 0;letter-spacing:1.600px;">SCREENCASTS</div>
<div class="t" style="left:601.25px;top:18.35px;font-size:20.5px;color:#c8bfba;-webkit-text-stroke:0.61px currentColor;transform:scaleX(0.8902);transform-origin:0 0;letter-spacing:1.600px;">APPROVALS</div>
<div class="t" style="left:756.25px;top:18.35px;font-size:20.5px;color:#c8bfba;-webkit-text-stroke:0.61px currentColor;transform:scaleX(0.8847);transform-origin:0 0;letter-spacing:1.600px;">SETTINGS</div>
<div class="t" style="left:918.62px;top:18.35px;font-size:20.5px;color:#c8bfba;-webkit-text-stroke:0.61px currentColor;transform:scaleX(0.8780);transform-origin:0 0;letter-spacing:1.600px;">DOWNLOAD</div>
<div class="t" style="left:1486.00px;top:18.09px;font-size:20.8px;color:#f2eeec;-webkit-text-stroke:0.33px currentColor;letter-spacing:0.455px;">Wishup Technology Pvt Ltd</div>
<div class="t" style="left:1948.45px;top:18.27px;font-size:20px;color:#c512e6;-webkit-text-stroke:0.32px currentColor;transform:scaleX(0.8538);transform-origin:0 0;">K</div>
<div class="t" style="left:14.50px;top:93.35px;font-size:27.7px;color:#ffffff;-webkit-text-stroke:0.83px currentColor;letter-spacing:0.241px;-webkit-text-stroke:1.0px #fff;">My Dashboard</div>
<div class="t" style="left:877.90px;top:98.09px;font-size:19.5px;color:#ffffff;-webkit-text-stroke:0.58px currentColor;letter-spacing:0.972px;">Export</div>
<div class="t" style="left:974.70px;top:97.71px;font-size:19.6px;color:#ffffff;-webkit-text-stroke:0.31px currentColor;letter-spacing:0.171px;">(UTC +05:30) Calcutta, Asia</div>
<div class="t" style="left:1313.75px;top:99.06px;font-size:17px;color:#ffffff;-webkit-text-stroke:0.51px currentColor;transform:scaleX(0.9227);transform-origin:0 0;letter-spacing:0.400px;">TODAY</div>
<div class="t" style="left:1413.75px;top:99.06px;font-size:17px;color:#cdc5c0;-webkit-text-stroke:0.51px currentColor;transform:scaleX(0.9013);transform-origin:0 0;letter-spacing:0.400px;">YESTERDAY</div>
<div class="t" style="left:1553.36px;top:99.06px;font-size:17px;color:#cdc5c0;-webkit-text-stroke:0.51px currentColor;transform:scaleX(0.9386);transform-origin:0 0;letter-spacing:0.400px;">PAST 7 DAYS</div>
<div class="t" style="left:1702.05px;top:99.06px;font-size:17px;color:#cdc5c0;-webkit-text-stroke:0.51px currentColor;transform:scaleX(0.9483);transform-origin:0 0;letter-spacing:0.400px;">PAST 30 DAYS</div>
<div class="t" style="left:1862.28px;top:99.06px;font-size:17px;color:#cdc5c0;-webkit-text-stroke:0.51px currentColor;transform:scaleX(0.9192);transform-origin:0 0;letter-spacing:0.400px;">DATE RANGE</div>
<div class="t" style="left:55.50px;top:212.94px;font-size:19.8px;color:#5a4a42;-webkit-text-stroke:0.32px currentColor;letter-spacing:0.374px;">Time tracked</div>
<div class="t" style="left:55.23px;top:245.80px;font-size:49.5px;color:#0a0a0a;-webkit-text-stroke:0.79px currentColor;transform:scaleX(0.9889);transform-origin:0 0;">1h 46m</div>
<div class="t" style="left:55.50px;top:301.67px;font-size:17.4px;color:#a4a7b5;-webkit-text-stroke:0.28px currentColor;letter-spacing:0.135px;">This week:</div>
<div class="t" style="left:165.20px;top:300.88px;font-size:16.8px;color:#272a37;-webkit-text-stroke:0.27px currentColor;letter-spacing:0.112px;">40h 45m</div>
<div class="t" style="left:55.50px;top:328.27px;font-size:17.4px;color:#a4a7b5;-webkit-text-stroke:0.28px currentColor;letter-spacing:0.348px;">This month:</div>
<div class="t" style="left:155.30px;top:327.48px;font-size:16.8px;color:#272a37;-webkit-text-stroke:0.27px currentColor;letter-spacing:0.177px;">147h 35m</div>
<div class="t" style="left:641.50px;top:212.94px;font-size:19.8px;color:#5a4a42;-webkit-text-stroke:0.32px currentColor;letter-spacing:0.524px;">Meeting time</div>
<div class="t" style="left:642.39px;top:245.80px;font-size:49.5px;color:#0a0a0a;-webkit-text-stroke:0.79px currentColor;transform:scaleX(1.0104);transform-origin:0 0;">0m</div>
<div class="t" style="left:642.50px;top:322.22px;font-size:19px;color:#0a0a0a;-webkit-text-stroke:0.30px currentColor;transform:scaleX(0.8815);transform-origin:0 0;">0%</div>
<div class="t" style="left:1226.40px;top:212.94px;font-size:19.8px;color:#5a4a42;-webkit-text-stroke:0.32px currentColor;letter-spacing:0.292px;">Productive websites &amp; apps</div>
<div class="t" style="left:1227.04px;top:245.50px;font-size:49.5px;color:#0a0a0a;-webkit-text-stroke:0.79px currentColor;transform:scaleX(0.8819);transform-origin:0 0;letter-spacing:0.500px;">88%</div>
<div class="t" style="left:1274.60px;top:360.01px;font-size:17px;color:#4e5370;-webkit-text-stroke:0.27px currentColor;letter-spacing:-0.078px;">Productivity ratings can be adjusted by your manager</div>
<div class="t" style="left:1811.60px;top:212.94px;font-size:19.8px;color:#5a4a42;-webkit-text-stroke:0.32px currentColor;letter-spacing:0.466px;">Manual time</div>
<div class="t" style="left:1812.49px;top:246.10px;font-size:49.5px;color:#0a0a0a;-webkit-text-stroke:0.79px currentColor;transform:scaleX(1.0104);transform-origin:0 0;">0m</div>
<div class="t" style="left:1812.60px;top:322.22px;font-size:19px;color:#0a0a0a;-webkit-text-stroke:0.30px currentColor;transform:scaleX(0.8815);transform-origin:0 0;">0%</div>
<div class="t" style="left:55.10px;top:485.57px;font-size:22.6px;color:#111111;-webkit-text-stroke:0.36px currentColor;letter-spacing:0.307px;">My working patterns</div>
<div class="t" style="left:811.80px;top:519.33px;font-size:16.5px;color:#9c9fad;-webkit-text-stroke:0.26px currentColor;letter-spacing:0.820px;">Start time:</div>
<div class="t" style="left:904.50px;top:517.56px;font-size:19.3px;color:#1e2130;-webkit-text-stroke:0.58px currentColor;letter-spacing:0.709px;">11:15 AM</div>
<div class="t" style="left:1061.40px;top:519.23px;font-size:16.5px;color:#9c9fad;-webkit-text-stroke:0.26px currentColor;letter-spacing:0.561px;">End time:</div>
<div class="t" style="left:1150.50px;top:517.56px;font-size:19.3px;color:#1e2130;-webkit-text-stroke:0.58px currentColor;letter-spacing:0.376px;">1:12 PM</div>
<div class="t" style="left:194.06px;top:671.43px;font-size:16.5px;color:#958b85;-webkit-text-stroke:0.26px currentColor;letter-spacing:0.45px;">2 AM</div>
<div class="t" style="left:351.78px;top:671.43px;font-size:16.5px;color:#958b85;-webkit-text-stroke:0.26px currentColor;letter-spacing:0.45px;">4 AM</div>
<div class="t" style="left:509.50px;top:671.43px;font-size:16.5px;color:#958b85;-webkit-text-stroke:0.26px currentColor;letter-spacing:0.45px;">6 AM</div>
<div class="t" style="left:667.22px;top:671.43px;font-size:16.5px;color:#958b85;-webkit-text-stroke:0.26px currentColor;letter-spacing:0.45px;">8 AM</div>
<div class="t" style="left:820.36px;top:671.43px;font-size:16.5px;color:#958b85;-webkit-text-stroke:0.26px currentColor;letter-spacing:0.45px;">10 AM</div>
<div class="t" style="left:978.08px;top:671.43px;font-size:16.5px;color:#958b85;-webkit-text-stroke:0.26px currentColor;letter-spacing:0.45px;">12 PM</div>
<div class="t" style="left:1140.38px;top:671.43px;font-size:16.5px;color:#958b85;-webkit-text-stroke:0.26px currentColor;letter-spacing:0.45px;">2 PM</div>
<div class="t" style="left:1298.10px;top:671.43px;font-size:16.5px;color:#958b85;-webkit-text-stroke:0.26px currentColor;letter-spacing:0.45px;">4 PM</div>
<div class="t" style="left:1455.82px;top:671.43px;font-size:16.5px;color:#958b85;-webkit-text-stroke:0.26px currentColor;letter-spacing:0.45px;">6 PM</div>
<div class="t" style="left:1613.54px;top:671.43px;font-size:16.5px;color:#958b85;-webkit-text-stroke:0.26px currentColor;letter-spacing:0.45px;">8 PM</div>
<div class="t" style="left:1766.68px;top:671.43px;font-size:16.5px;color:#958b85;-webkit-text-stroke:0.26px currentColor;letter-spacing:0.45px;">10 PM</div>
<div class="t" style="left:103.50px;top:744.31px;font-size:17px;color:#4e5370;-webkit-text-stroke:0.27px currentColor;letter-spacing:-0.041px;">Consistent patterns lead to a better routine, better work-life balance, and clearer expectations from your team</div>
<div class="t" style="left:81.00px;top:812.28px;font-size:16.8px;color:#5a4a42;-webkit-text-stroke:0.27px currentColor;letter-spacing:0.627px;">Computer Time</div>
<div class="t" style="left:297.50px;top:812.28px;font-size:16.8px;color:#5a4a42;-webkit-text-stroke:0.27px currentColor;letter-spacing:0.746px;">Manual Time</div>
<div class="t" style="left:513.80px;top:812.28px;font-size:16.8px;color:#5a4a42;-webkit-text-stroke:0.27px currentColor;letter-spacing:0.877px;">Mobile Time</div>
<div class="t" style="left:731.00px;top:812.28px;font-size:16.8px;color:#5a4a42;-webkit-text-stroke:0.27px currentColor;letter-spacing:0.574px;">Break Time</div>
<div class="t" style="left:947.50px;top:812.28px;font-size:16.8px;color:#5a4a42;-webkit-text-stroke:0.27px currentColor;letter-spacing:0.565px;">Leave Time</div>
<div class="t" style="left:1826.90px;top:812.38px;font-size:16.8px;color:#5a4a42;-webkit-text-stroke:0.27px currentColor;letter-spacing:0.669px;text-decoration:underline;text-underline-offset:3px;text-decoration-thickness:1.5px;">Timeline report</div>
<div class="t" style="left:55.00px;top:916.94px;font-size:22.4px;color:#111111;-webkit-text-stroke:0.36px currentColor;letter-spacing:0.192px;">Recent screencasts</div>
<div class="t" style="left:1735.50px;top:1051.79px;font-size:19.5px;color:#141414;-webkit-text-stroke:0.31px currentColor;letter-spacing:-0.088px;">Ask me anything...</div>

<!-- chat widget -->
<div class="a" style="left:1560px;top:960px;width:417px;height:152px;background:radial-gradient(ellipse 260px 110px at 240px 130px, rgba(0,0,0,0.045), rgba(0,0,0,0) 100%);z-index:1;"></div>
<div class="a" style="left:1686px;top:1033.2px;width:281.7px;height:55.3px;border-radius:28px;background:#fff;border:2px solid #8a8a8a;z-index:2;"></div>
<svg class="a" style="left:1700px;top:1049px;z-index:3" width="26" height="25" viewBox="0 0 26 25"><path d="M13 1 Q14.2 10.6 24.5 12.3 Q14.2 14 13 23.8 Q11.8 14 1.5 12.3 Q11.8 10.6 13 1 Z" fill="#161616"/></svg>
<svg class="a" style="left:1929px;top:1050px;z-index:3" width="24" height="23" viewBox="0 0 24 23"><path d="M7.4 12.5 L3.9 8.8 Q3 7.6 4.6 7.1 L19.8 3.4 Q21.3 3.1 21 4.6 L16.6 19.5 Q16 21 14.7 19.9 L9.7 14.8 L14.9 8.9" fill="none" stroke="#141414" stroke-width="1.9" stroke-linejoin="round" stroke-linecap="round"/></svg>
<div class="a" style="left:1656.8px;top:1049.5px;width:4.5px;height:4.5px;border-radius:50%;background:#555;"></div>
<div class="a" style="left:1667.3px;top:1049.5px;width:4.5px;height:4.5px;border-radius:50%;background:#555;"></div>
<div class="a" style="left:1656.8px;top:1060.4px;width:4.5px;height:4.5px;border-radius:50%;background:#555;"></div>
<div class="a" style="left:1667.3px;top:1060.4px;width:4.5px;height:4.5px;border-radius:50%;background:#555;"></div>
<div class="a" style="left:1656.8px;top:1071px;width:4.5px;height:4.5px;border-radius:50%;background:#555;"></div>
<div class="a" style="left:1667.3px;top:1071px;width:4.5px;height:4.5px;border-radius:50%;background:#555;"></div>
</body></html>
